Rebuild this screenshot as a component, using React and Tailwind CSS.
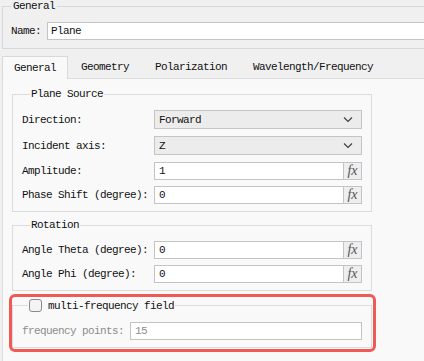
import React from 'react';

const ChevronDown = () => (
  <svg width="10" height="6" viewBox="0 0 10 6" className="shrink-0">
    <path d="M1 0.5 L5 4.5 L9 0.5" fill="none" stroke="#3c3c3c" strokeWidth="1.1" />
  </svg>
);

const Combo = ({ value }) => (
  <div className="flex h-[19px] w-[208px] items-center justify-between border border-[#c4c4c4] bg-[#ececec] pl-[4px] pr-[8px]">
    <span>{value}</span>
    <ChevronDown />
  </div>
);

const FxInput = ({ value }) => (
  <div className="flex h-[18px] w-[208px]">
    <div className="flex flex-1 items-center border border-[#c4c4c4] bg-white pl-[4px]">{value}</div>
    <div className="flex w-[18px] items-center justify-center border border-l-0 border-[#c4c4c4] bg-[#eeeeee] font-['Liberation_Serif',serif] text-[14px] italic tracking-normal text-[#555]">
      fx
    </div>
  </div>
);

const Row = ({ label, children, className = '' }) => (
  <div className={`flex items-center ${className}`}>
    <span className="w-[132px] shrink-0">{label}</span>
    {children}
  </div>
);

const Tab = ({ label, active }) =>
  active ? (
    <div className="relative z-10 -mb-px flex h-[23px] w-[66px] items-center justify-center border border-b-0 border-[#d9d9d9] bg-[#f9f9f9]">
      {label}
    </div>
  ) : (
    <div className="flex h-[22px] items-center px-[13px]">{label}</div>
  );

export default function App() {
  return (
    <div className="h-[361px] w-[424px] overflow-hidden bg-[#f0f0f0] font-['Liberation_Mono',monospace] text-[11px] leading-[12px] tracking-[-0.6px] text-[#111]">
      {/* General group */}
      <fieldset className="ml-[2px] h-[49px] w-[460px] border border-[#d8d8d8]">
        <legend className="ml-[8px] px-[2px]">General</legend>
        <div className="flex items-center pt-[10px] pl-[8px]">
          <span className="w-[36px] shrink-0">Name:</span>
          <div className="flex h-[18px] flex-1 items-center border border-[#c4c4c4] bg-white pl-[3px]">Plane</div>
        </div>
      </fieldset>

      {/* Tabs */}
      <div className="ml-[2px] mt-[7px] flex items-end">
        <Tab label="General" active />
        <Tab label="Geometry" />
        <Tab label="Polarization" />
        <Tab label="Wavelength/Frequency" />
      </div>

      {/* Panel */}
      <div className="ml-[2px] h-[300px] w-[460px] border-l border-t border-[#dedede] bg-[#f9f9f9] pl-[9px] pt-[9px]">
        <fieldset className="w-[360px] border border-[#dcdcdc] pb-[7px] pl-[9px] pr-[8px]">
          <legend className="ml-[8px] px-[1px]">Plane Source</legend>
          <div className="flex flex-col pt-[10px]">
            <Row label="Direction:">
              <Combo value="Forward" />
            </Row>
            <Row label="Incident axis:" className="mt-[7px]">
              <Combo value="Z" />
            </Row>
            <Row label="Amplitude:" className="mt-[7px]">
              <FxInput value="1" />
            </Row>
            <Row label="Phase Shift (degree):" className="mt-[6px]">
              <FxInput value="0" />
            </Row>
          </div>
        </fieldset>

        <fieldset className="mt-[7px] w-[360px] border border-[#dcdcdc] pb-[7px] pl-[9px] pr-[8px]">
          <legend className="ml-[8px] px-[1px]">Rotation</legend>
          <div className="flex flex-col pt-[10px]">
            <Row label="Angle Theta (degree):">
              <FxInput value="0" />
            </Row>
            <Row label="Angle Phi (degree):" className="mt-[6px]">
              <FxInput value="0" />
            </Row>
          </div>
        </fieldset>

        <div className="relative mt-[8px] w-[360px]">
          <fieldset className="w-[360px] border border-[#dcdcdc] pb-[7px] pl-[9px] pr-[8px]">
            <legend className="ml-[6px] flex items-center px-[1px]">
              <span className="h-[13px] w-[13px] rounded-[3px] border border-[#8a8a8a] bg-[#f4f4f4]"></span>
              <span className="ml-[6px]">multi-frequency field</span>
            </legend>
            <div className="flex items-center pt-[10px]">
              <span className="w-[108px] shrink-0 text-[#8c8c8c]">frequency points:</span>
              <div className="flex h-[18px] w-[232px] items-center border border-[#c4c4c4] bg-white pl-[4px] text-[#8c8c8c]">15</div>
            </div>
          </fieldset>
          <div className="pointer-events-none absolute left-[-3px] right-[-4px] top-[-5px] bottom-[-4px] rounded-[6px] border-[3px] border-[#ef5a57]"></div>
        </div>
      </div>
    </div>
  );
}
